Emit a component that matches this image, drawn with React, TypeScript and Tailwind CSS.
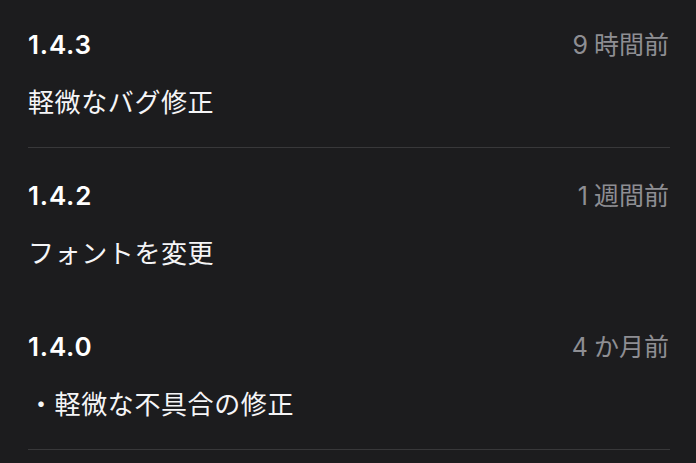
type Release = {
  version: string;
  num: string;
  unit: string;
  note: string;
  divider: boolean;
};

const releases: Release[] = [
  { version: "1.4.3", num: "9", unit: "時間前", note: "軽微なバグ修正", divider: true },
  { version: "1.4.2", num: "1", unit: "週間前", note: "フォントを変更", divider: false },
  { version: "1.4.0", num: "4", unit: "か月前", note: "・軽微な不具合の修正", divider: true },
];

export default function App() {
  return (
    <div
      className="w-[696px] h-[463px] overflow-hidden bg-[#1c1c1e] text-white"
      style={{ fontFamily: 'Inter, "Noto Sans CJK JP", sans-serif' }}
    >
      <div className="-mt-[3px]">
        {releases.map((r) => (
          <div
            key={r.version}
            className={`ml-[28px] mr-[26px] pt-[33px] pb-[29px] border-b ${
              r.divider ? "border-[#38383a]" : "border-transparent"
            }`}
          >
            {/* version + time */}
            <div className="flex items-baseline justify-between">
              <span className="text-[26px] leading-[30px] font-semibold tracking-[0.8px]">{r.version}</span>
              <span className="text-[25px] leading-[30px] text-[#8e8e93] mr-[1px]">
                <span className="mr-[6px]">{r.num}</span>
                {r.unit}
              </span>
            </div>

            {/* note */}
            <p className="mt-[28px] text-[26px] leading-[30px] tracking-[0.6px] text-[#f5f5f7]">{r.note}</p>
          </div>
        ))}
      </div>
    </div>
  );
}
